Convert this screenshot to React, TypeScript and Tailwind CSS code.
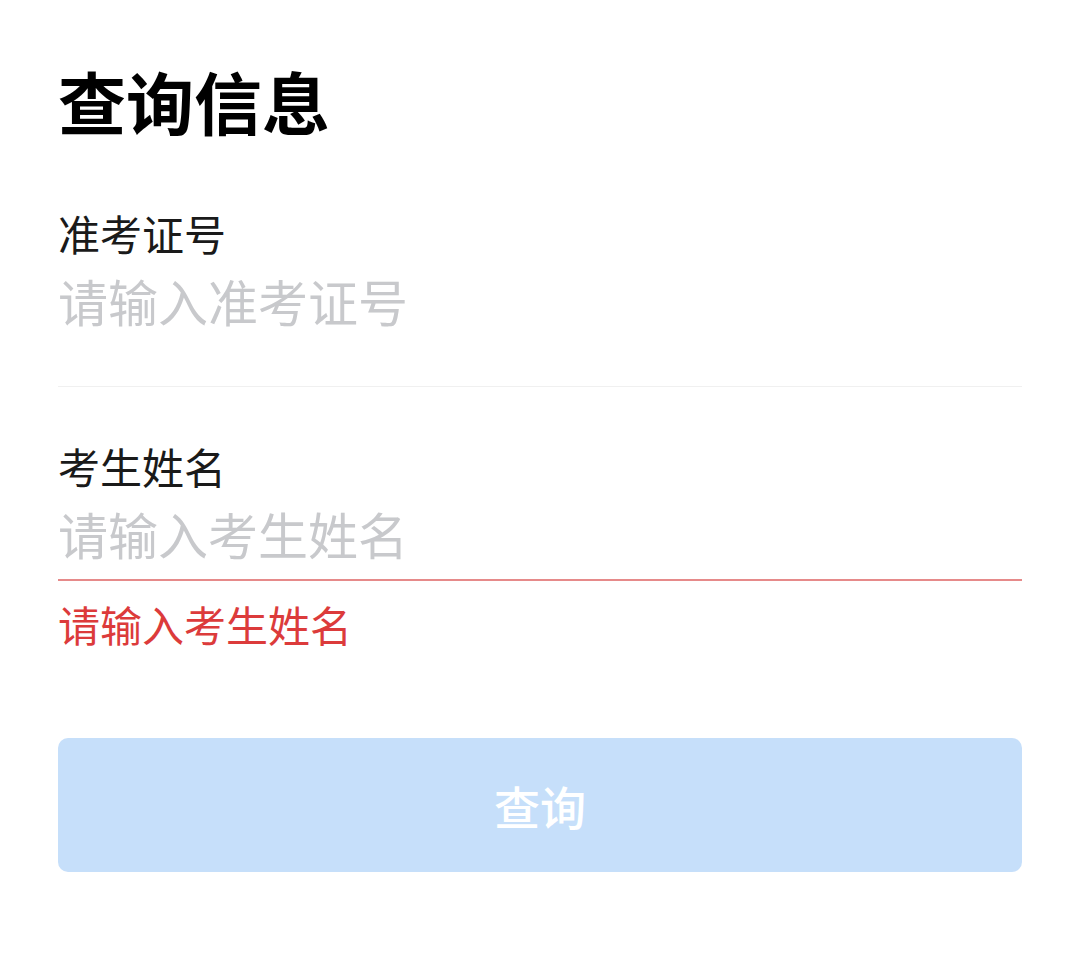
import React from 'react';

const font = { fontFamily: '"Noto Sans CJK SC", "Noto Sans", sans-serif' };

const App: React.FC = () => {
  return (
    <div className="min-h-[961px] w-full bg-white px-[58px] pt-[61px]" style={font}>
      <h1 className="text-[68px] font-bold leading-[80px] text-black">查询信息</h1>

      <div className="mt-[68px] border-b border-[#f0f0f0] pb-[56px]">
        <label className="block text-[42px] leading-[48px] text-[#1a1a1a]">准考证号</label>
        <input
          className="mt-[13px] block h-[60px] w-full bg-transparent text-[50px] leading-[60px] text-[#323233] outline-none placeholder:text-[#c8c9cc]"
          placeholder="请输入准考证号"
        />
      </div>

      <div className="mt-[55px]">
        <label className="block text-[42px] leading-[48px] text-[#1a1a1a]">考生姓名</label>
        <input
          className="mt-[13px] block h-[60px] w-full bg-transparent text-[50px] leading-[60px] text-[#323233] outline-none placeholder:text-[#c8c9cc]"
          placeholder="请输入考生姓名"
        />
        <div className="mt-[16px] h-[2px] w-full bg-[#e68a8a]" />
        <p className="mt-[18px] text-[42px] leading-[50px] text-[#dc3b3b]">请输入考生姓名</p>
      </div>

      <button
        type="button"
        disabled
        className="mt-[89px] flex h-[134px] w-full items-center justify-center rounded-[10px] bg-[#c6dffa] text-[46px] font-medium text-white"
      >
        查询
      </button>
    </div>
  );
};

export default App;
